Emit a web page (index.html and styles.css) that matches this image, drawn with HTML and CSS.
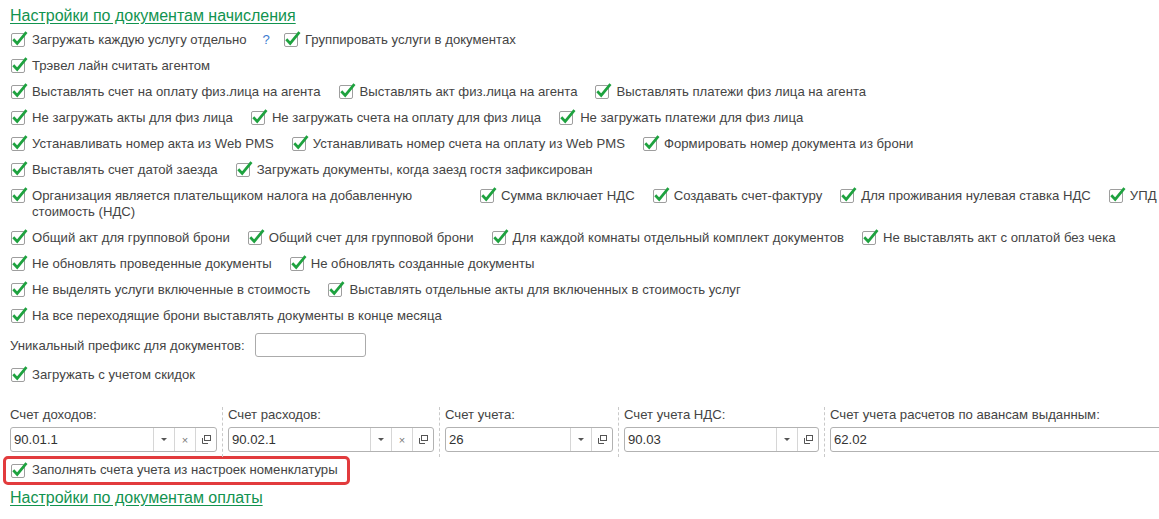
FILE: index.html
```html
<!DOCTYPE html>
<html lang="ru">
<head>
<meta charset="utf-8">
<title>Настройки</title>
<link rel="stylesheet" href="styles.css">
</head>
<body>
<svg class="defs" width="0" height="0" aria-hidden="true">
  <defs>
    <symbol id="chk" viewBox="0 0 18 17">
      <rect x="1.5" y="2.5" width="13" height="13" rx="1.5" fill="#fff" stroke="#9e9e9e"/>
      <path d="M4.2 9.2 L7.2 12.4 L15.6 2.2" fill="none" stroke="#1ea23f" stroke-width="2.7" stroke-linecap="square" stroke-linejoin="miter"/>
    </symbol>
    <symbol id="open" viewBox="0 0 11 11">
      <rect x="3.5" y="1.5" width="6" height="5" fill="none" stroke="#555"/>
      <path d="M1.5 4 V9.5 H7" fill="none" stroke="#555"/>
    </symbol>
  </defs>
</svg>
<div class="page">
  <div class="group-title"><span>Настройки по документам начисления</span></div>

  <div class="row">
    <div class="opt"><svg class="cb"><use href="#chk"/></svg><span>Загружать каждую услугу отдельно</span><span class="help">?</span></div>
    <div class="opt"><svg class="cb"><use href="#chk"/></svg><span>Группировать услуги в документах</span></div>
  </div>
  <div class="row">
    <div class="opt"><svg class="cb"><use href="#chk"/></svg><span>Трэвел лайн считать агентом</span></div>
  </div>
  <div class="row">
    <div class="opt"><svg class="cb"><use href="#chk"/></svg><span>Выставлять счет на оплату физ.лица на агента</span></div>
    <div class="opt"><svg class="cb"><use href="#chk"/></svg><span>Выставлять акт физ.лица на агента</span></div>
    <div class="opt"><svg class="cb"><use href="#chk"/></svg><span>Выставлять платежи физ лица на агента</span></div>
  </div>
  <div class="row">
    <div class="opt"><svg class="cb"><use href="#chk"/></svg><span>Не загружать акты для физ лица</span></div>
    <div class="opt"><svg class="cb"><use href="#chk"/></svg><span>Не загружать счета на оплату для физ лица</span></div>
    <div class="opt"><svg class="cb"><use href="#chk"/></svg><span>Не загружать платежи для физ лица</span></div>
  </div>
  <div class="row">
    <div class="opt"><svg class="cb"><use href="#chk"/></svg><span>Устанавливать номер акта из Web PMS</span></div>
    <div class="opt"><svg class="cb"><use href="#chk"/></svg><span>Устанавливать номер счета на оплату из Web PMS</span></div>
    <div class="opt"><svg class="cb"><use href="#chk"/></svg><span>Формировать номер документа из брони</span></div>
  </div>
  <div class="row">
    <div class="opt"><svg class="cb"><use href="#chk"/></svg><span>Выставлять счет датой заезда</span></div>
    <div class="opt"><svg class="cb"><use href="#chk"/></svg><span>Загружать документы, когда заезд гостя зафиксирован</span></div>
  </div>
  <div class="row">
    <div class="opt wide"><svg class="cb"><use href="#chk"/></svg><span>Организация является плательщиком налога на добавленную стоимость (НДС)</span></div>
    <div class="opt"><svg class="cb"><use href="#chk"/></svg><span>Сумма включает НДС</span></div>
    <div class="opt"><svg class="cb"><use href="#chk"/></svg><span>Создавать счет-фактуру</span></div>
    <div class="opt"><svg class="cb"><use href="#chk"/></svg><span>Для проживания нулевая ставка НДС</span></div>
    <div class="opt"><svg class="cb"><use href="#chk"/></svg><span>УПД</span></div>
  </div>
  <div class="row">
    <div class="opt"><svg class="cb"><use href="#chk"/></svg><span>Общий акт для групповой брони</span></div>
    <div class="opt"><svg class="cb"><use href="#chk"/></svg><span>Общий счет для групповой брони</span></div>
    <div class="opt"><svg class="cb"><use href="#chk"/></svg><span>Для каждой комнаты отдельный комплект документов</span></div>
    <div class="opt"><svg class="cb"><use href="#chk"/></svg><span>Не выставлять акт с оплатой без чека</span></div>
  </div>
  <div class="row">
    <div class="opt"><svg class="cb"><use href="#chk"/></svg><span>Не обновлять проведенные документы</span></div>
    <div class="opt"><svg class="cb"><use href="#chk"/></svg><span>Не обновлять созданные документы</span></div>
  </div>
  <div class="row">
    <div class="opt"><svg class="cb"><use href="#chk"/></svg><span>Не выделять услуги включенные в стоимость</span></div>
    <div class="opt"><svg class="cb"><use href="#chk"/></svg><span>Выставлять отдельные акты для включенных в стоимость услуг</span></div>
  </div>
  <div class="row">
    <div class="opt"><svg class="cb"><use href="#chk"/></svg><span>На все переходящие брони выставлять документы в конце месяца</span></div>
  </div>

  <div class="prefix-row">
    <span class="prefix-label">Уникальный префикс для документов:</span>
    <span class="text-input"></span>
  </div>

  <div class="row">
    <div class="opt"><svg class="cb"><use href="#chk"/></svg><span>Загружать с учетом скидок</span></div>
  </div>

  <div class="fields">
    <div class="field f1">
      <div class="flabel">Счет доходов:</div>
      <div class="input"><span class="val">90.01.1</span><span class="btn"><span class="tri"></span></span><span class="btn clr">×</span><span class="btn"><svg class="ico"><use href="#open"/></svg></span></div>
    </div>
    <div class="field f2">
      <div class="flabel">Счет расходов:</div>
      <div class="input"><span class="val">90.02.1</span><span class="btn"><span class="tri"></span></span><span class="btn clr">×</span><span class="btn"><svg class="ico"><use href="#open"/></svg></span></div>
    </div>
    <div class="field f3">
      <div class="flabel">Счет учета:</div>
      <div class="input"><span class="val">26</span><span class="btn"><span class="tri"></span></span><span class="btn"><svg class="ico"><use href="#open"/></svg></span></div>
    </div>
    <div class="field f4">
      <div class="flabel">Счет учета НДС:</div>
      <div class="input"><span class="val">90.03</span><span class="btn"><span class="tri"></span></span><span class="btn"><svg class="ico"><use href="#open"/></svg></span></div>
    </div>
    <div class="field f5">
      <div class="flabel">Счет учета расчетов по авансам выданным:</div>
      <div class="input"><span class="val">62.02</span></div>
    </div>
  </div>

  <div class="highlight">
    <div class="opt"><svg class="cb"><use href="#chk"/></svg><span>Заполнять счета учета из настроек номенклатуры</span></div>
  </div>

  <div class="group-title second"><span>Настройки по документам оплаты</span></div>
</div>
</body>
</html>
```

FILE: styles.css
```css
* { box-sizing: border-box; }

html, body {
  margin: 0;
  padding: 0;
  background: #fff;
}

body {
  font-family: "Liberation Sans", Arial, sans-serif;
  font-size: 13.15px;
  color: #444;
  width: 1159px;
  height: 519px;
  overflow: hidden;
}

.defs { position: absolute; width: 0; height: 0; }

.page {
  padding-left: 10px;
  overflow: hidden;
}

.group-title {
  height: 27px;
  padding-top: 6px;
  font-size: 16px;
  line-height: 20px;
  color: #12934f;
}

.group-title span {
  text-decoration: underline;
  text-underline-offset: 2px;
}

.group-title.second {
  height: auto;
  padding-top: 3px;
}

.row {
  display: flex;
  gap: 17px;
  padding: 5px 0;
  line-height: 16px;
  white-space: nowrap;
}

.opt {
  display: flex;
  align-items: flex-start;
  gap: 4px;
  flex: none;
}

.opt.wide {
  width: 452px;
  white-space: normal;
}

.cb {
  width: 18px;
  height: 17px;
  flex: none;
  margin-top: -1px;
}

.help {
  color: #3b7bd0;
  margin-left: 12px;
  margin-right: -4px;
}

.prefix-row {
  display: flex;
  align-items: center;
  padding: 4px 0 5px;
}

.prefix-label {
  margin-right: 10px;
}

.text-input {
  width: 111px;
  height: 24px;
  border: 1px solid #ababab;
  border-radius: 3px;
  background: #fff;
}

.fields {
  display: flex;
  padding-top: 19px;
  height: 69px;
}

.field {
  flex: none;
}

.field + .field {
  border-left: 1px dashed #c9c9c9;
  margin-left: 5px;
  padding-left: 5px;
}

.f1 { width: 207px; }
.f2 { width: 212px; }
.f3 { width: 174px; }
.f4 { width: 201px; }
.f5 { width: 360px; }

.flabel {
  line-height: 16px;
  margin-bottom: 4px;
  white-space: nowrap;
}

.input {
  display: flex;
  height: 25px;
  border: 1px solid #b2b2b2;
  border-radius: 3px;
  background: #fff;
  color: #333;
}

.val {
  flex: 1;
  padding-left: 3px;
  line-height: 23px;
}

.btn {
  width: 21px;
  flex: none;
  border-left: 1px solid #d6d6d6;
  display: flex;
  align-items: center;
  justify-content: center;
}

.tri {
  width: 0;
  height: 0;
  border-left: 3px solid transparent;
  border-right: 3px solid transparent;
  border-top: 3px solid #555;
}

.clr {
  color: #7a7a7a;
  font-size: 11px;
}

.ico {
  width: 11px;
  height: 11px;
}

.highlight {
  display: flex;
  align-items: center;
  width: fit-content;
  height: 29px;
  margin-left: -7px;
  margin-top: -1px;
  padding: 0 9px 0 4px;
  border: 3px solid #e23b3d;
  border-radius: 5px;
  line-height: 16px;
  white-space: nowrap;
}

.highlight .cb {
  margin-top: 0;
}
```
